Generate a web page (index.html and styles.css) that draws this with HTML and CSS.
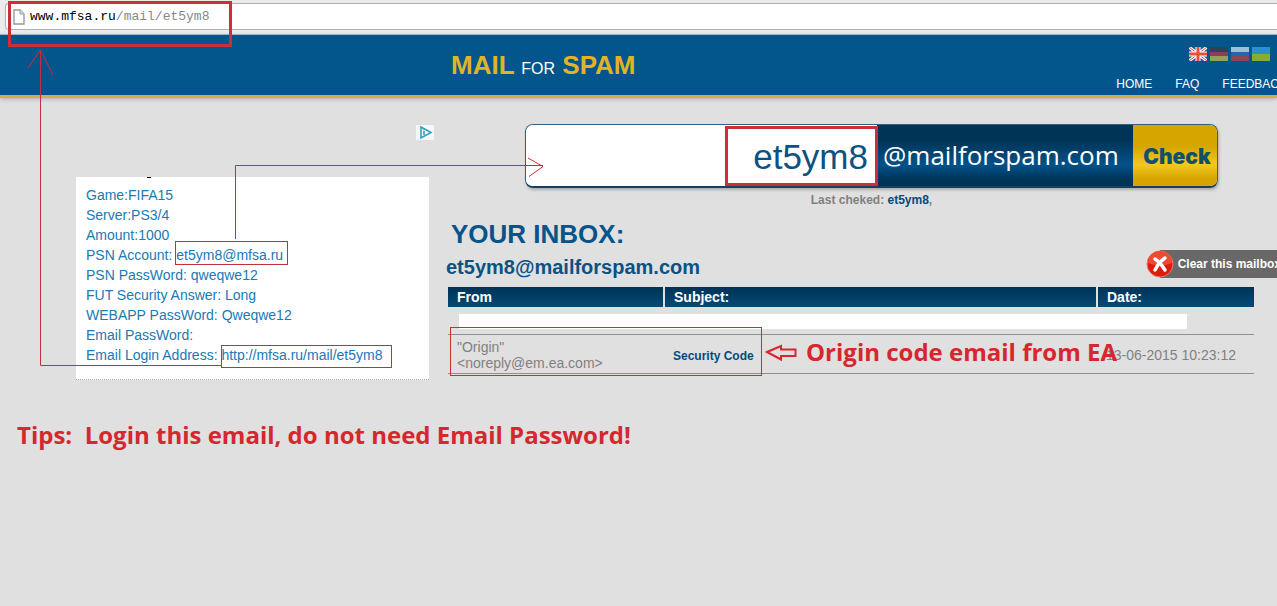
FILE: index.html
```html
<!DOCTYPE html>
<html lang="en">
<head>
    <meta charset="UTF-8">
    <meta name="viewport" content="width=device-width, initial-scale=1.0">
    <title>Mail for Spam</title>
    <link rel="stylesheet" href="styles.css">
</head>
<body>
    <div class="browser_bar">
        <div class="address" role="textbox" aria-label="Address" contenteditable="true" spellcheck="false">
            <svg class="page_icon" width="12" height="16" viewBox="0 0 12 16">
                <path d="M1 1h6l4 4v10H1z" fill="#fff" stroke="#999" stroke-width="1.4"/>
                <path d="M7 1v4h4" fill="#ddd" stroke="#999"/>
            </svg>
            <span><span class="host">www.mfsa.ru</span>/mail/et5ym8</span>
        </div>
    </div>

    <header>
        <a class="logo" href="#">MAIL <span>FOR</span> SPAM</a>
        <nav>
            <div class="languages">
                <a href="#" class="active" aria-label="English">
                    <svg width="18" height="14" viewBox="0 0 18 14">
                        <path d="M0 0h18v14H0z" fill="#35549c"/>
                        <path d="M0 0l18 14M18 0L0 14" stroke="#fff" stroke-width="3"/>
                        <path d="M0 0l18 14M18 0L0 14" stroke="#e04a40" stroke-width="1"/>
                        <path d="M9 0v14M0 7h18" stroke="#fff" stroke-width="5"/>
                        <path d="M9 0v14M0 7h18" stroke="#e8503c" stroke-width="3"/>
                    </svg>
                </a>
                <a href="#" aria-label="Deutsch">
                    <svg width="18" height="14" viewBox="0 0 18 14">
                        <path d="M0 0h18v5H0z" fill="#2c4258"/>
                        <path d="M0 5h18v4H0z" fill="#8a4056"/>
                        <path d="M0 9h18v5H0z" fill="#8fa45a"/>
                    </svg>
                </a>
                <a href="#" aria-label="Русский">
                    <svg width="18" height="14" viewBox="0 0 18 14">
                        <path d="M0 0h18v5H0z" fill="#9dbdd8"/>
                        <path d="M0 5h18v4H0z" fill="#2168b4"/>
                        <path d="M0 9h18v5H0z" fill="#8f425e"/>
                    </svg>
                </a>
                <a href="#" aria-label="Українська">
                    <svg width="18" height="14" viewBox="0 0 18 14">
                        <path d="M0 0h18v7H0z" fill="#2f8dcb"/>
                        <path d="M0 7h18v7H0z" fill="#86ae32"/>
                    </svg>
                </a>
            </div>
            <div class="links">
                <a href="#">HOME</a>
                <a href="#">FAQ</a>
                <a href="#">FEEDBACK</a>
            </div>
        </nav>
    </header>

    <main>
        <aside>
            <a class="ad_choices" href="#" aria-label="AdChoices">
                <svg width="18" height="15" viewBox="0 0 18 15">
                    <path d="M5 2l10 5.500-10 5.500z" fill="none" stroke="#2fa3bd" stroke-width="1.600"/>
                    <path d="M8 6v4" stroke="#2fa3bd" stroke-width="1.600"/>
                    <circle cx="8" cy="4.600" r="0.800" fill="#2fa3bd"/>
                </svg>
            </a>
            <div class="account">
                <div>Game:FIFA15</div>
                <div>Server:PS3/4</div>
                <div>Amount:1000</div>
                <div>PSN Account: <span>et5ym8@mfsa.ru</span></div>
                <div>PSN PassWord: qweqwe12</div>
                <div>FUT Security Answer: Long</div>
                <div>WEBAPP PassWord: Qweqwe12</div>
                <div>Email PassWord:</div>
                <div>Email Login Address: <span>http://mfsa.ru/mail/et5ym8</span></div>
            </div>
        </aside>

        <section>
            <div class="search">
                <form>
                    <input type="text" value="et5ym8" aria-label="Mailbox name">
                    <span class="domain">@mailforspam.com</span>
                    <button type="button">Check</button>
                </form>
                <div class="last">Last cheked: <a href="#">et5ym8</a>,</div>
            </div>

            <h1>YOUR INBOX:</h1>
            <div class="mailbox">
                <h2>et5ym8@mailforspam.com</h2>
                <button type="button" class="clear">
                    <svg width="28" height="28" viewBox="0 0 28 28">
                        <circle cx="14" cy="14" r="13" fill="#dc1c0c" stroke="#f0786a" stroke-width="1"/>
                        <path d="M2 13a12 12 0 0 1 24 0q-12 5-24 0z" fill="#ee4a32"/>
                        <path d="M9 9q5 3 10 11M19 8q-6 4-10 12" fill="none" stroke="#fff" stroke-width="3.500" stroke-linecap="round"/>
                    </svg>
                    <span>Clear this mailbox</span>
                </button>
            </div>

            <table>
                <thead>
                    <tr>
                        <th class="from">From</th>
                        <th>Subject:</th>
                        <th class="date">Date:</th>
                    </tr>
                </thead>
                <tbody>
                    <tr class="hidden_mail">
                        <td colspan="3"><div></div></td>
                    </tr>
                    <tr class="mail">
                        <td>"Origin"<br>&lt;noreply@em.ea.com&gt;</td>
                        <td><a href="#">Security Code</a></td>
                        <td>13-06-2015 10:23:12</td>
                    </tr>
                </tbody>
            </table>
        </section>
    </main>

    <p class="tips">Tips:&nbsp; Login this email, do not need Email Password!</p>

    <!-- red marks drawn over the page -->
    <div class="notes">
        <svg width="1277" height="606" viewBox="0 0 1277 606" fill="none" stroke="#c4303a">
            <rect x="9.500" y="2.500" width="221" height="43" stroke="#c9303a" stroke-width="3"/>
            <rect x="726.500" y="127.500" width="150" height="57" stroke="#c9303a" stroke-width="3"/>
            <rect x="175.500" y="241.500" width="112" height="23"/>
            <rect x="221.500" y="345.500" width="170" height="22"/>
            <rect x="450.500" y="327.500" width="311" height="48"/>
            <path d="M235.500 239V165.500H543M528 158l15 8.500-14 10"/>
            <path d="M221 365.500H40.500V50M28 68l12.500-18L53 75"/>
            <path d="M767 352l14-6v3.500h14.500v6.500H781v3.500z" stroke="#d6262e" stroke-width="2"/>
            <path d="M147 177.500h4" stroke="#000"/>
        </svg>
        <p>Origin code email from EA</p>
    </div>
</body>
</html>
```
FILE: styles.css
```css
* {
    box-sizing: border-box;
}
body {
    position: relative;
    min-height: 100vh;
    margin: 0;
    background-color: #e0e0e0;
    color: #808080;
    font-family: "Liberation Sans", Arial, sans-serif;
    font-size: 14px;
    overflow-x: hidden;
}
a {
    color: #064a7c;
    text-decoration: none;
}

.browser_bar {
    height: 35px;
    padding: 3px 0 5px 5px;
    background-color: #ebebeb;
    border-bottom: 1px solid #9fb9cc;
}
.address {
    display: flex;
    align-items: center;
    gap: 5px;
    height: 27px;
    padding-left: 7px;
    background-color: white;
    border: 1px solid #b0b0b0;
    border-right: none;
    border-radius: 4px 0 0 4px;
    color: #888;
    font-family: "Liberation Mono", monospace;
    font-size: 13px;
}
.host {
    color: black;
}

header {
    display: flex;
    justify-content: space-between;
    height: 63px;
    padding-left: 451px;
    background-color: #03568b;
    border-bottom: 3px solid #d0b044;
    box-shadow: 0 1px 4px #aaa;
    overflow: hidden;
}
.logo {
    padding-top: 15px;
    color: #e0b422;
    font-size: 26px;
    font-weight: bold;
    line-height: 30px;
}
.logo span {
    color: white;
    font-size: 16px;
    font-weight: normal;
}
nav {
    flex-shrink: 0;
    margin-right: -10px;
    padding-top: 12px;
}
.languages {
    display: flex;
    justify-content: flex-end;
    gap: 3px;
    height: 14px;
    padding-right: 17px;
}
.languages svg {
    display: block;
}
.links {
    display: flex;
    gap: 23px;
    padding-top: 15px;
}
.links a {
    color: white;
    font-size: 12px;
    line-height: 16px;
}

main {
    display: grid;
    grid-template-columns: 429px 1fr;
    column-gap: 19px;
    padding-top: 26px;
}
aside {
    padding-left: 76px;
}
.ad_choices {
    display: block;
    width: 18px;
    height: 15px;
    margin: 1px 0 37px 340px;
    background-color: #f4f8f8;
}
.ad_choices svg {
    display: block;
}
.account {
    height: 203px;
    padding: 8px 10px;
    background-color: white;
    border-bottom: 1px dotted #aaa;
    color: #2079b5;
    line-height: 20px;
}

section {
    min-width: 0;
}
.search {
    width: 693px;
    margin-left: 77px;
}
form {
    display: flex;
    height: 64px;
    border: 1px solid #35607f;
    border-bottom: 2px solid #17405f;
    border-radius: 8px;
    box-shadow: 1px 2px 3px #aaa;
    overflow: hidden;
}
form input {
    flex: 1;
    min-width: 0;
    padding: 2px 9px 0 9px;
    border: none;
    color: #0b5280;
    font-family: inherit;
    font-size: 35px;
    text-align: right;
}
.domain {
    width: 256px;
    padding-left: 6px;
    background: linear-gradient(#003457 25%, #02528a 65%, #003457 90%);
    color: white;
    font-family: "Open Sans", sans-serif;
    font-size: 26px;
    line-height: 61px;
    white-space: nowrap;
}
form button {
    width: 84px;
    padding: 2px 0 0 4px;
    border: none;
    background: linear-gradient(#d6a500 35%, #f2c820 65%, #d6a500 88%);
    color: #12506a;
    font-family: "Inter", sans-serif;
    font-size: 21px;
    font-weight: 900;
}
.last {
    padding-top: 4px;
    font-size: 12px;
    font-weight: bold;
    line-height: 16px;
    text-align: center;
}

h1 {
    margin: 10px 0 0 3px;
    color: #06548a;
    font-size: 26px;
    line-height: 32px;
}
.mailbox {
    display: flex;
    justify-content: space-between;
    height: 37px;
}
h2 {
    margin: 0 0 0 -2px;
    padding-top: 5px;
    color: #0b5280;
    font-size: 20px;
    line-height: 24px;
}
.mailbox .clear {
    display: flex;
    align-items: center;
    flex-shrink: 0;
    gap: 4px;
    height: 28px;
    margin-right: -8px;
    padding: 0;
    border: none;
    background: linear-gradient(90deg, transparent 14px, #686868 14px);
    color: white;
    font-family: inherit;
    font-size: 12px;
    font-weight: bold;
}
.clear span {
    padding-right: 4px;
}

table {
    width: calc(100% - 23px);
    border-collapse: collapse;
    table-layout: fixed;
}
th {
    height: 20px;
    padding: 0 9px;
    background: linear-gradient(#003355, #064a78);
    color: white;
    line-height: 20px;
    text-align: left;
}
th + th {
    border-left: 2px solid #e0e0e0;
}
.from {
    width: 216px;
}
.date {
    width: 157px;
}
td {
    padding: 4px 9px 2px;
    line-height: 16px;
}
.hidden_mail td {
    padding: 7px 67px 5px 11px;
}
.hidden_mail div {
    height: 15px;
    background-color: white;
}
.mail td {
    border-top: 1px solid #909090;
    border-bottom: 1px solid #909090;
}
.mail a {
    font-size: 12px;
    font-weight: bold;
}

.tips,
.notes p {
    margin: 0;
    color: #d6262e;
    font-family: "Open Sans", sans-serif;
    font-size: 24px;
    font-weight: bold;
    line-height: 32px;
    white-space: nowrap;
}
.tips {
    padding: 39px 0 0 17px;
}

.notes {
    position: absolute;
    top: 0;
    left: 0;
    pointer-events: none;
}
.notes svg {
    display: block;
}
.notes p {
    position: absolute;
    top: 336px;
    left: 806px;
}
```
